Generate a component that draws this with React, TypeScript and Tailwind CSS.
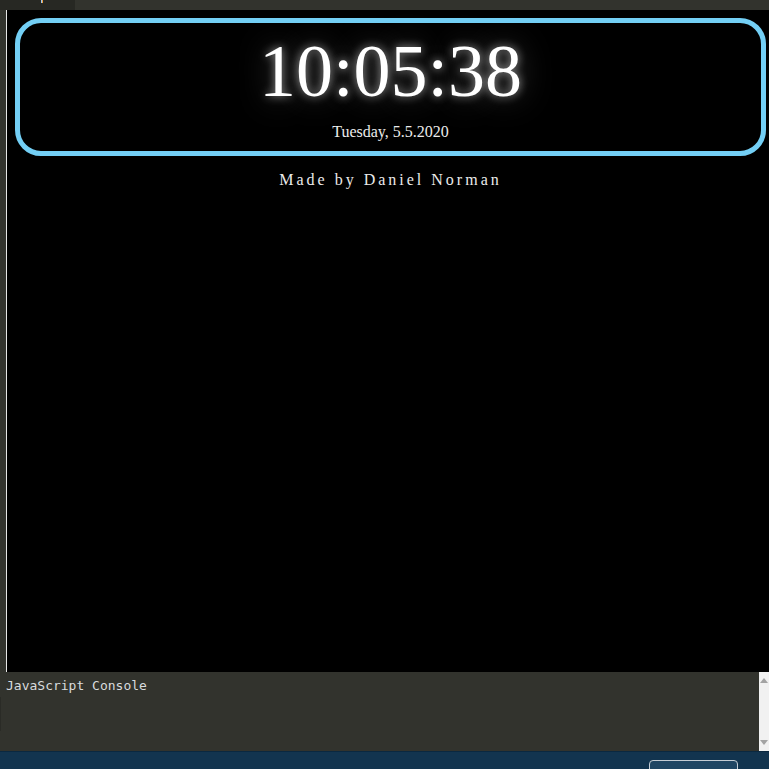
import React from 'react';

const serif = { fontFamily: '"Liberation Serif", "Times New Roman", serif' };

const App: React.FC = () => {
  return (
    <div className="w-[769px] h-[769px] flex flex-col overflow-hidden bg-black">
      {/* editor tab strip */}
      <div className="h-[10px] flex bg-[#32332d] shrink-0">
        <div className="w-[75px] bg-[#272823] relative">
          <div className="absolute left-[41px] top-0 w-px h-[3px] bg-[#9cc8f0]" />
          <div className="absolute left-[42px] top-0 w-px h-[3px] bg-[#f0a040]" />
        </div>
      </div>

      {/* preview pane */}
      <div className="flex-1 flex min-h-0">
        <div className="w-[6px] bg-[#32332d]" />
        <div className="w-px bg-[#e6e6e6]" />
        <div className="flex-1 bg-black pt-[8px]">
          <div className="ml-[8px] w-[751px] flex flex-col items-center" style={serif}>
            <div className="w-full h-[138px] border-[5px] border-[#73cff5] rounded-[26px] flex flex-col items-center pt-[11px]">
              <div className="text-[74px] leading-none text-white [text-shadow:0_0_10px_rgba(255,255,255,0.6),0_0_32px_rgba(255,255,255,0.35)]">
                10:05:38
              </div>
              <div className="mt-[16px] text-[16px] leading-none text-[#ececec]">Tuesday, 5.5.2020</div>
            </div>
            <div className="mt-[16px] text-[16px] leading-none tracking-[3px] text-[#ebebeb]">Made by Daniel Norman</div>
          </div>
        </div>
      </div>

      {/* console */}
      <div className="h-[79px] shrink-0 flex bg-[#32332d]">
        <div className="flex-1 relative pl-[6px]">
          <div className="absolute left-0 top-[25px] w-px h-[34px] bg-[#2a2b26]" />
          <span
            className="text-[13px] leading-[14px] text-[#d8dbde]"
            style={{ fontFamily: '"DejaVu Sans Mono", "Liberation Mono", monospace' }}
          >
            JavaScript Console
          </span>
        </div>
        <div className="w-[10px] bg-[#f1f1f1] flex flex-col items-center justify-between py-[6px]">
          <svg width="8" height="5" viewBox="0 0 8 5">
            <path d="M4 0 L8 5 L0 5 Z" fill="#a3a3a3" />
          </svg>
          <svg width="8" height="5" viewBox="0 0 8 5">
            <path d="M0 0 L8 0 L4 5 Z" fill="#a3a3a3" />
          </svg>
        </div>
      </div>

      {/* footer bar */}
      <div className="h-[18px] shrink-0 border-t border-[#0a2840] bg-[#12344f] relative">
        <div className="absolute left-[649px] top-[8px] w-[89px] h-[20px] rounded-[4px] border border-[#c4ccd4] bg-[#1f4563]" />
      </div>
    </div>
  );
};

export default App;
